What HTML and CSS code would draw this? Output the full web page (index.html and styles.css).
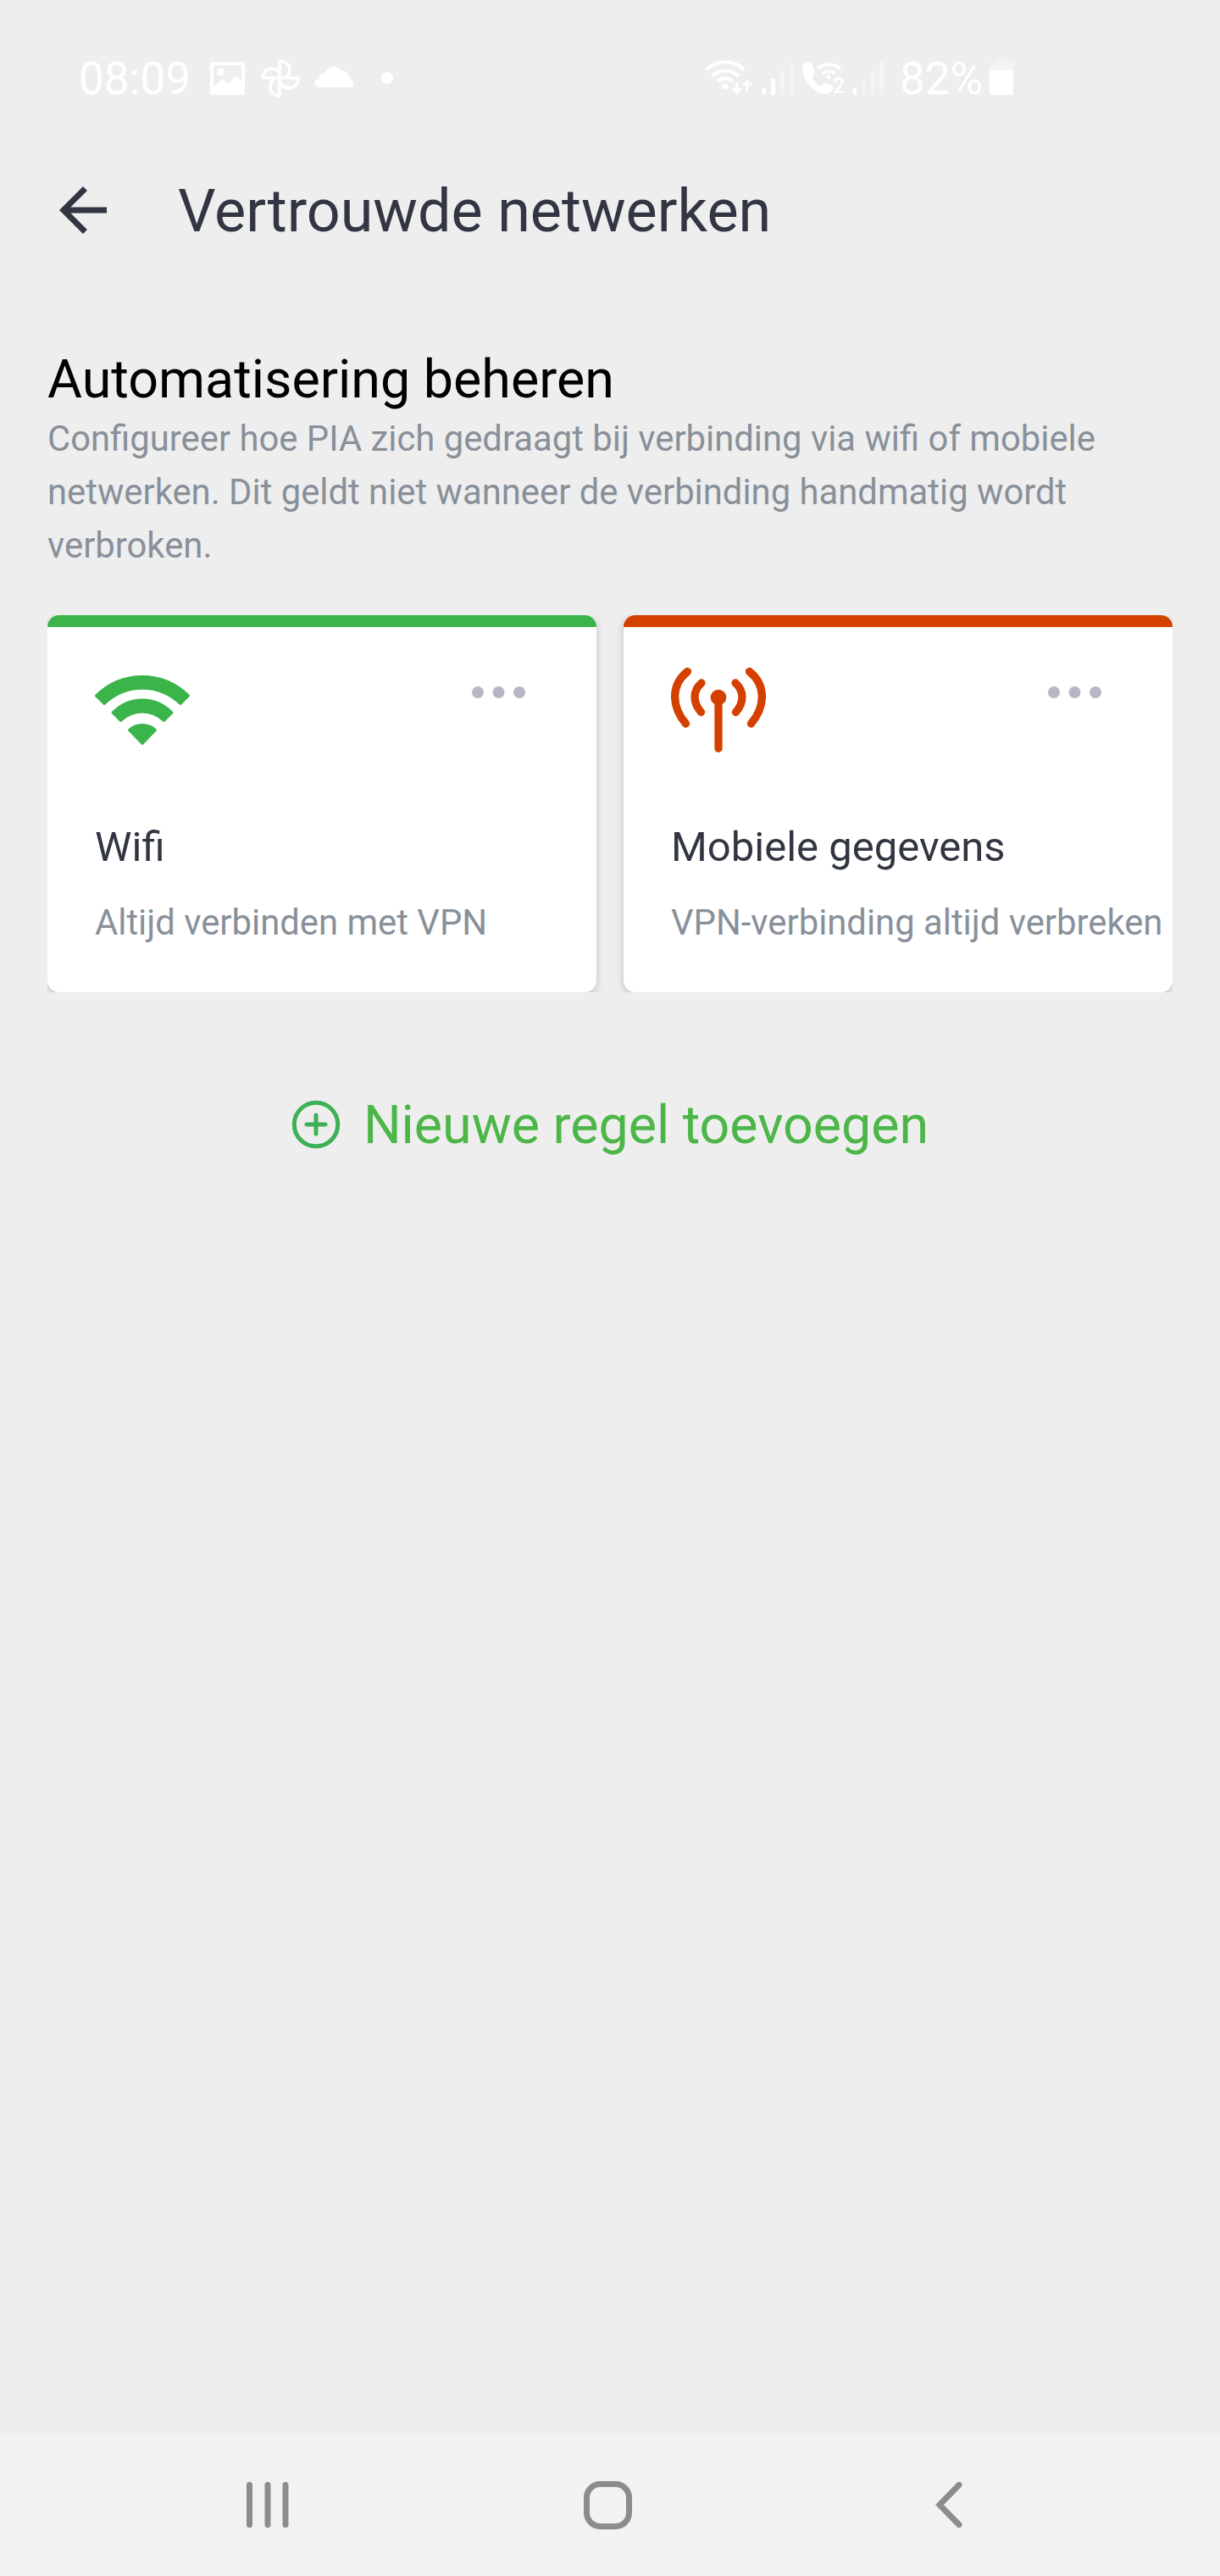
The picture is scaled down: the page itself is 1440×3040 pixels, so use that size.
FILE: index.html
```html
<!DOCTYPE html>
<html lang="nl">
<head>
    <meta charset="UTF-8">
    <meta name="viewport" content="width=device-width, initial-scale=1.0">
    <title>Vertrouwde netwerken</title>
    <link rel="stylesheet" href="styles.css">
</head>
<body>
    <div class="screen">
        <div class="status-bar">
            <span class="clock">08:09</span>
            <!-- notification icons -->
            <svg class="notifications" width="220" height="60" viewBox="0 0 220 60" fill="#fff">
                <path fill-rule="evenodd" d="M3 13h35q3 0 3 3v33q0 3-3 3H3q-3 0-3-3V16q0-3 3-3zM4 17v26l10-10 7 6 9-10 7 6V17z"/>
                <circle cx="12.500" cy="25" r="4.500"/>
                <g fill="none" stroke="#fff" stroke-width="3.600" stroke-linejoin="round">
                    <path d="M82 32V12c8 0 12 5 12 10 0 4-2 7-4 9"/>
                    <path d="M82 32h22c0 8-5 12-10 12-5 0-9-2-12-7"/>
                    <path d="M82 32v21c-8 0-11-5-11-10 0-5 2-8 5-11"/>
                    <path d="M82 32H62c0-7 5-11 10-11 4 0 8 2 10 5"/>
                </g>
                <path d="M129 43a5 5 0 0 1-1-10 8 8 0 0 1 8-7c3-9 14-10 19-2 6-1 9 4 10 9 6 2 5 10 1 10z"/>
                <circle cx="209" cy="32" r="7"/>
            </svg>
            <!-- connection icons -->
            <svg class="signals" width="222" height="60" viewBox="0 0 222 60" fill="#fff">
                <g fill="none" stroke="#fff" stroke-width="4.200">
                    <path d="M2 22a32 32 0 0 1 44 0"/>
                    <path d="M8 30a23 23 0 0 1 32 0"/>
                    <path d="M15 36a14 14 0 0 1 18 0"/>
                </g>
                <circle cx="24" cy="42" r="3.500"/>
                <path fill="none" stroke="#fff" stroke-width="3" d="M38 37v12m-5-5l5 5 5-5M50 48V36m-5 5l5-5 5 5"/>
                <path d="M68 44h4v8h-4zM78 33h5v19h-5z"/>
                <path opacity=".35" d="M89 23h5v29h-5zM100 13h4v39h-4z"/>
                <path d="M121 13q-7 3-6 10c3 16 15 27 28 28q5 0 9-8l-9-5-7 4q-7-4-9-11l3-6-4-11z"/>
                <g fill="none" stroke="#fff" stroke-width="3.600">
                    <path d="M133 21a21 21 0 0 1 27 0"/>
                    <path d="M139 27a12 12 0 0 1 15 0"/>
                </g>
                <circle cx="146" cy="31" r="2.500"/>
                <text class="sim" x="151" y="50">2</text>
                <path d="M175 44h4v8h-4z"/>
                <path opacity=".35" d="M186 33h4v19h-4zM196 23h5v29h-5zM206 13h5v39h-5z"/>
            </svg>
            <span class="percent">82%</span>
            <svg class="battery" width="28" height="60" viewBox="0 0 28 60" fill="#fff">
                <path opacity=".35" d="M8 10h11v3h9v10H0V13h8z"/>
                <path d="M0 23h28v29H0z"/>
            </svg>
        </div>

        <header class="toolbar">
            <svg class="back" width="84" height="84" viewBox="0 0 24 24">
                <path fill="#323642" d="M20 11H7.830l5.590-5.590L12 4l-8 8 8 8 1.410-1.410L7.830 13H20z"/>
            </svg>
            <h1>Vertrouwde netwerken</h1>
        </header>

        <main>
            <h2>Automatisering beheren</h2>
            <p class="description">Configureer hoe PIA zich gedraagt bij verbinding via wifi of mobiele netwerken. Dit geldt niet wanneer de verbinding handmatig wordt verbroken.</p>

            <div class="rules">
                <div class="card card-connect">
                    <div class="card-head">
                        <svg width="112" height="112" viewBox="0 0 112 112" fill="#3bb44a" stroke="#3bb44a" stroke-width="3" stroke-linejoin="round">
                            <path d="M1.500 39C32 9 80 9 110.500 39L101 48.500C75 24 37 24 11 48.500z"/>
                            <path d="M21 59c20-20 50-20 70 0l-9.500 9.500c-15-14-36-14-51 0z"/>
                            <path d="M40.500 79.500c9-8 22-8 31 0L56 95.500z"/>
                        </svg>
                        <svg class="more" width="64" height="16" viewBox="0 0 64 16">
                            <circle cx="7" cy="8" r="7"/><circle cx="31.500" cy="8" r="7"/><circle cx="56" cy="8" r="7"/>
                        </svg>
                    </div>
                    <h3>Wifi</h3>
                    <p>Altijd verbinden met VPN</p>
                </div>
                <div class="card card-disconnect">
                    <div class="card-head">
                        <svg width="112" height="112" viewBox="0 0 112 112" fill="none" stroke="#d44000" stroke-width="9.300" stroke-linecap="round">
                            <path d="M19.500 10.500C0 26 0 51 17.500 72"/>
                            <path d="M36 24C25.500 33 25.500 47 35.500 58.500"/>
                            <path d="M76 24C86.500 33 86.500 47 76.500 58.500"/>
                            <path d="M92.500 10.500C112 26 112 51 94.500 72"/>
                            <path d="M56 42v59.300"/>
                            <circle cx="56" cy="41" r="9.300" fill="#d44000" stroke="none"/>
                        </svg>
                        <svg class="more" width="64" height="16" viewBox="0 0 64 16">
                            <circle cx="7" cy="8" r="7"/><circle cx="31.500" cy="8" r="7"/><circle cx="56" cy="8" r="7"/>
                        </svg>
                    </div>
                    <h3>Mobiele gegevens</h3>
                    <p>VPN-verbinding altijd verbreken</p>
                </div>
            </div>

            <div class="add-rule">
                <svg width="58" height="58" viewBox="0 0 58 58" fill="none" stroke="#3eb055" stroke-width="5" stroke-linecap="round">
                    <circle cx="29" cy="29" r="25.700"/>
                    <path d="M29 18v22M18 29h22"/>
                </svg>
                <span>Nieuwe regel toevoegen</span>
            </div>
        </main>

        <nav class="nav-bar">
            <svg width="50" height="54" viewBox="0 0 50 54">
                <path d="M3.500 3.500v47M25 3.500v47M46 3.500v47"/>
            </svg>
            <svg class="home" width="57" height="57" viewBox="0 0 57 57">
                <rect x="3.500" y="3.500" width="50" height="50" rx="16"/>
            </svg>
            <svg width="32" height="54" viewBox="0 0 32 54">
                <path d="M28 3.500L5 27l23 23.500"/>
            </svg>
        </nav>
    </div>
</body>
</html>
```

FILE: styles.css
```css
* {
    margin: 0;
    padding: 0;
    box-sizing: border-box;
}
body {
    background-color: #eeeeee;
    font-family: Roboto, sans-serif;
}
h1, h2, h3 {
    font-weight: 400;
}
svg {
    display: block;
    flex: none;
}
.screen {
    height: 3040px;
    display: flex;
    flex-direction: column;
    overflow: hidden;
}

/* status bar */
.status-bar {
    height: 150px;
    padding: 30px 242px 0 93px;
    display: flex;
    align-items: center;
    color: #fff;
    font-size: 53px;
}
.clock {
    width: 155px;
    padding-top: 6px;
}
.signals {
    margin-left: 364px;
}
.sim {
    font-size: 25px;
    font-weight: 500;
}
.percent {
    width: 106px;
    margin-left: 8px;
    padding-top: 6px;
}

/* toolbar */
.toolbar {
    height: 196px;
    padding-left: 56px;
    display: flex;
    align-items: center;
    gap: 70px;
    color: #323642;
}
.toolbar h1 {
    font-size: 70.1px;
    line-height: 84px;
    padding-top: 2px;
}

/* content */
main {
    flex: 1;
    padding: 65px 56px 0;
}
main h2 {
    font-size: 62.8px;
    line-height: 74px;
    color: #000;
}
.description {
    margin-top: 1px;
    font-size: 41.8px;
    line-height: 63px;
    color: #889099;
}
.rules {
    display: grid;
    grid-template-columns: 648px 648px;
    gap: 32px;
    margin-top: 51px;
    overflow: hidden;
}
.card {
    height: 445px;
    padding: 42px 0 0 56px;
    background: #fff;
    border-top: 14px solid;
    border-radius: 14px;
    box-shadow: 0 3px 10px rgba(0, 0, 0, 0.2);
    white-space: nowrap;
}
.card-connect {
    border-color: #3bb44a;
}
.card-disconnect {
    border-color: #d44000;
}
.card-head {
    display: flex;
    justify-content: space-between;
    padding-right: 83px;
}
.more {
    margin-top: 27px;
    fill: #b8b5c6;
}
.card h3 {
    margin-top: 77px;
    font-size: 49px;
    line-height: 58px;
    color: #323642;
}
.card p {
    margin-top: 35px;
    font-size: 41.8px;
    line-height: 50px;
    color: #889099;
}
.add-rule {
    display: flex;
    justify-content: center;
    align-items: center;
    gap: 27px;
    margin-top: 117px;
    font-size: 62.7px;
    line-height: 76px;
    color: #4cb649;
}
.add-rule span {
    padding-top: 2px;
}

/* system navigation */
.nav-bar {
    height: 168px;
    padding-left: 291px;
    display: flex;
    align-items: center;
    background: #f2f2f2;
    fill: none;
    stroke: #8c8c8c;
    stroke-width: 7;
    stroke-linecap: round;
}
.home {
    margin: 0 358px 0 348px;
}
```
